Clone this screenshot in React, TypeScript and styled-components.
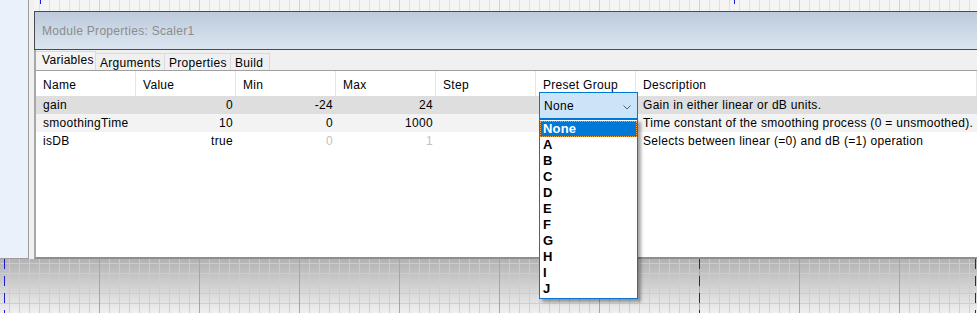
import styled, { createGlobalStyle } from "styled-components";

const GlobalStyle = createGlobalStyle`
  html, body {
    margin: 0;
    padding: 0;
    background: #f0f0f0;
  }
  body {
    font-family: "Liberation Sans", Arial, sans-serif;
    font-size: 12px;
    letter-spacing: 0.3px;
    color: #000;
  }
`;

type Variable = {
  name: string;
  value: string;
  min: string;
  max: string;
  step: string;
  description: string;
  bg: string;
  disabledRange?: boolean;
};

const variables: Variable[] = [
  {
    name: "gain",
    value: "0",
    min: "-24",
    max: "24",
    step: "",
    description: "Gain in either linear or dB units.",
    bg: "#dedede",
  },
  {
    name: "smoothingTime",
    value: "10",
    min: "0",
    max: "1000",
    step: "",
    description: "Time constant of the smoothing process (0 = unsmoothed).",
    bg: "#f3f3f3",
  },
  {
    name: "isDB",
    value: "true",
    min: "0",
    max: "1",
    step: "",
    description: "Selects between linear (=0) and dB (=1) operation",
    bg: "#ffffff",
    disabledRange: true,
  },
];

const columns = ["Name", "Value", "Min", "Max", "Step", "Preset Group", "Description"];
const tabs = ["Variables", "Arguments", "Properties", "Build"];
const tabWidths = [60, 70, 67, 40];
const presetOptions = ["None", "A", "B", "C", "D", "E", "F", "G", "H", "I", "J"];

const App = () => {
  return (
    <Page>
      <GlobalStyle />
      <Middle>
        <SidePanel />
        <Splitter />
        <RightColumn>
          <TopCanvas>
            <Marker $left={6} $top />
            <Marker $left={700} $top />
          </TopCanvas>
          <Window>
            <TitleBar>Module Properties: Scaler1</TitleBar>
            <Body>
              <TabStrip>
                {tabs.map((tab, i) => (
                  <Tab key={tab} $active={i === 0} $width={tabWidths[i]}>
                    {tab}
                  </Tab>
                ))}
              </TabStrip>
              <TablePanel>
                <HeaderRow>
                  {columns.map((col) => (
                    <HeaderCell key={col}>{col}</HeaderCell>
                  ))}
                </HeaderRow>
                {variables.map((v, i) => (
                  <DataRow key={v.name} $bg={v.bg}>
                    <Cell>{v.name}</Cell>
                    <Cell $right>{v.value}</Cell>
                    <Cell $right $muted={v.disabledRange}>
                      {v.min}
                    </Cell>
                    <Cell $right $muted={v.disabledRange}>
                      {v.max}
                    </Cell>
                    <Cell $right>{v.step}</Cell>
                    <PresetCell>
                      {i === 0 && (
                        <>
                          <Combo>
                            <span>None</span>
                            <svg width="8" height="5" viewBox="0 0 8 5">
                              <path
                                d="M0.5 0.5 L4 4 L7.5 0.5"
                                fill="none"
                                stroke="#606060"
                                strokeWidth="1"
                              />
                            </svg>
                          </Combo>
                          <DropList>
                            {presetOptions.map((opt, j) => (
                              <Option key={opt} $selected={j === 0}>
                                {opt}
                              </Option>
                            ))}
                          </DropList>
                        </>
                      )}
                    </PresetCell>
                    <Cell>{v.description}</Cell>
                  </DataRow>
                ))}
              </TablePanel>
            </Body>
          </Window>
        </RightColumn>
      </Middle>
      <BottomCanvas>
        <Marker $left={4} />
        <Marker $left={699} />
        <Marker $left={975} />
      </BottomCanvas>
    </Page>
  );
};

export default App;

const Page = styled.div`
  width: 977px;
  height: 313px;
  overflow: hidden;
  display: flex;
  flex-direction: column;
  background: #f0f0f0;
`;

const Middle = styled.div`
  height: 259px;
  display: flex;
  flex-shrink: 0;
`;

const SidePanel = styled.div`
  width: 28px;
  height: 258px;
  background: #eaf1fb;
  border-right: 1px solid #9c9c9c;
  border-bottom: 1px solid #9c9c9c;
`;

const Splitter = styled.div`
  width: 5px;
  background: #f0f0f0;
`;

const RightColumn = styled.div`
  flex: 1;
  display: flex;
  flex-direction: column;
  min-width: 0;
`;

const TopCanvas = styled.div`
  position: relative;
  height: 11px;
  background-color: #f4f4f4;
  background-image: linear-gradient(to right, #d2d2d2 1px, transparent 1px),
    linear-gradient(to right, #e0e0e0 1px, transparent 1px);
  background-size: 100px 100%, 10px 100%;
  background-position: 65px 0, 5px 0;
`;

const Marker = styled.div<{ $left: number; $top?: boolean }>`
  position: absolute;
  left: ${(p) => p.$left}px;
  top: 0;
  width: 1px;
  height: ${(p) => (p.$top ? "4px" : "100%")};
  background: ${(p) =>
    p.$top
      ? "#1a1ae0"
      : "repeating-linear-gradient(to bottom, #1a1ad0 0 10px, transparent 10px 17px)"};
`;

const Window = styled.div`
  flex: 1;
  display: flex;
  flex-direction: column;
  min-height: 0;
`;

const TitleBar = styled.div`
  height: 37px;
  display: flex;
  align-items: center;
  padding-left: 7px;
  border-top: 1px solid #4c4c4c;
  border-bottom: 1px solid #4c4c4c;
  border-left: 1px solid #4c4c4c;
  background: linear-gradient(to bottom, #bccadb, #dce6f1);
  color: #8c8c8c;
  font-size: 12px;
`;

const Body = styled.div`
  flex: 1;
  display: flex;
  flex-direction: column;
  border-left: 2px solid #a8a8a8;
  border-bottom: 2px solid #8e8e8e;
  background: #f0f0f0;
  min-height: 0;
`;

const TabStrip = styled.div`
  height: 20px;
  display: flex;
  align-items: flex-end;
`;

const Tab = styled.div<{ $active?: boolean; $width: number }>`
  box-sizing: border-box;
  width: ${(p) => p.$width}px;
  height: ${(p) => (p.$active ? "19px" : "17px")};
  padding-left: ${(p) => (p.$active ? "6px" : "4px")};
  padding-top: ${(p) => (p.$active ? "1px" : "2px")};
  background: ${(p) => (p.$active ? "#f4f4f4" : "#f0f0f0")};
  border: 1px solid #dadada;
  border-bottom: none;
  border-left: ${(p) => (p.$active ? "none" : "1px solid #dadada")};
  margin-left: -1px;
  white-space: nowrap;
  &:first-child {
    margin-left: 0;
  }
`;

const TablePanel = styled.div`
  flex: 1;
  background: #ffffff;
  border-top: 1px solid #a0a0a0;
  display: flex;
  flex-direction: column;
`;

const grid = `
  display: grid;
  grid-template-columns: 100px 100px 100px 100px 100px 100px 1fr;
`;

const HeaderRow = styled.div`
  ${grid}
  height: 25px;
  background: #ffffff;
`;

const HeaderCell = styled.div`
  display: flex;
  align-items: center;
  padding: 2px 0 0 7px;
  border-right: 1px solid #e5e5e5;
  white-space: nowrap;
`;

const DataRow = styled.div<{ $bg: string }>`
  ${grid}
  height: 18px;
  background: ${(p) => p.$bg};
`;

const Cell = styled.div<{ $right?: boolean; $muted?: boolean }>`
  display: flex;
  align-items: center;
  justify-content: ${(p) => (p.$right ? "flex-end" : "flex-start")};
  padding: ${(p) => (p.$right ? "0 3px 0 0" : "0 0 0 7px")};
  color: ${(p) => (p.$muted ? "#c0c0c0" : "#000")};
  white-space: nowrap;
  overflow: visible;
`;

const PresetCell = styled.div`
  position: relative;
`;

const Combo = styled.div`
  position: absolute;
  left: 3px;
  top: -4px;
  box-sizing: border-box;
  width: 99px;
  height: 27px;
  display: flex;
  align-items: center;
  justify-content: space-between;
  padding: 0 6px 0 4px;
  background: #cce4f7;
  border: 1px solid #0078d7;
  z-index: 2;

  svg {
    margin-top: 3px;
  }
`;

const DropList = styled.div`
  position: absolute;
  left: 3px;
  top: 23px;
  box-sizing: border-box;
  width: 99px;
  padding: 1px 0;
  background: #ffffff;
  border: 1px solid #0a74d0;
  box-shadow: 3px 3px 3px rgba(0, 0, 0, 0.35);
  z-index: 3;
`;

const Option = styled.div<{ $selected?: boolean }>`
  box-sizing: border-box;
  height: 16px;
  line-height: 14px;
  padding-left: 2px;
  font-size: 13px;
  font-weight: bold;
  letter-spacing: 0.2px;
  color: ${(p) => (p.$selected ? "#ffffff" : "#000000")};
  background: ${(p) => (p.$selected ? "#0078d7" : "transparent")};
  border: 1px dotted ${(p) => (p.$selected ? "#f0a040" : "transparent")};
`;

const BottomCanvas = styled.div`
  position: relative;
  flex: 1;
  background-color: #d0d0d0;
  background-image: linear-gradient(to right, #a6a6a6 1px, transparent 1px),
    linear-gradient(to right, rgba(205, 205, 205, 0.95) 1px, transparent 1px),
    linear-gradient(to bottom, rgba(205, 205, 205, 0.95) 1px, transparent 1px),
    linear-gradient(to bottom, #b2b2b2, #f0f0f0);
  background-size: 100px 100%, 10px 100%, 100% 10px, 100% 100%;
  background-position: 99px 0, 9px 0, 0 4px, 0 0;
`;
